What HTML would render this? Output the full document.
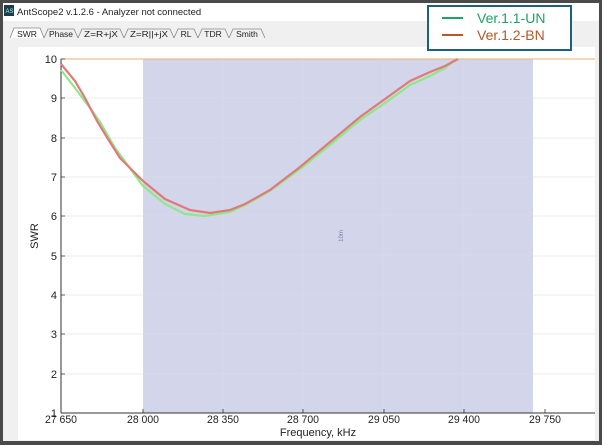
<!DOCTYPE html>
<html><head><meta charset="utf-8"><style>
html,body{margin:0;padding:0;width:602px;height:445px;overflow:hidden;background:#4a4a4a;font-family:"Liberation Sans",sans-serif}
svg{display:block}
</style></head><body>
<svg width="602" height="445" xmlns="http://www.w3.org/2000/svg" font-family="Liberation Sans, sans-serif">
<rect x="0" y="0" width="602" height="445" fill="#4a4a4a"/>
<rect x="3" y="3" width="596" height="438" fill="#f0f0f0"/>
<rect x="3" y="3" width="596" height="18" fill="#fff"/>
<rect x="4" y="5" width="10" height="11" fill="#1f3a4d"/>
<text x="5.5" y="13" font-size="6" fill="#9fd">AS</text>
<text x="17" y="15" font-size="9.5" fill="#222">AntScope2 v.1.2.6 - Analyzer not connected</text>
<g stroke="#888" stroke-width="0.8">
<path d="M10,38 L14,28 H40 L44,38" fill="#fff"/>
<path d="M44,38 L48,29 H74 L78,38" fill="#f0f0f0"/>
<path d="M78,38 L82,29 H120 L124,38" fill="#f0f0f0"/>
<path d="M124,38 L128,29 H170 L174,38" fill="#f0f0f0"/>
<path d="M174,38 L178,29 H194 L198,38" fill="#f0f0f0"/>
<path d="M198,38 L202,29 H225 L229,38" fill="#f0f0f0"/>
<path d="M229,38 L233,29 H261 L265,38" fill="#f0f0f0"/>
</g>
<g font-size="8.5" fill="#222" text-anchor="middle">
<text x="27" y="37">SWR</text><text x="61" y="37">Phase</text><text x="101" y="37" textLength="34" lengthAdjust="spacingAndGlyphs">Z=R+jX</text>
<text x="149" y="37" textLength="38" lengthAdjust="spacingAndGlyphs">Z=R||+jX</text><text x="186" y="37">RL</text><text x="213" y="37">TDR</text><text x="247" y="37">Smith</text>
</g>
<rect x="18" y="47" width="577" height="393" fill="#fff"/>
<rect x="143" y="59" width="390" height="354" fill="#d3d5ea"/>
<g stroke="#dcdde6" stroke-width="0.5">
<line x1="61" y1="98" x2="595" y2="98"/><line x1="61" y1="138" x2="595" y2="138"/><line x1="61" y1="177" x2="595" y2="177"/>
<line x1="61" y1="216" x2="595" y2="216"/><line x1="61" y1="256" x2="595" y2="256"/><line x1="61" y1="295" x2="595" y2="295"/>
<line x1="61" y1="334" x2="595" y2="334"/><line x1="61" y1="374" x2="595" y2="374"/>
<line x1="223" y1="59" x2="223" y2="413"/><line x1="303" y1="59" x2="303" y2="413"/><line x1="384" y1="59" x2="384" y2="413"/><line x1="464" y1="59" x2="464" y2="413"/>
</g>
<line x1="61" y1="59" x2="595" y2="59" stroke="#e8b070" stroke-width="1"/>
<line x1="61" y1="59" x2="61" y2="413" stroke="#333"/>
<line x1="61" y1="413" x2="595" y2="413" stroke="#333"/>
<g stroke="#333" stroke-width="0.8">
<path d="M61,59h4M61,98h4M61,138h4M61,177h4M61,216h4M61,256h4M61,295h4M61,334h4M61,374h4M61,413h4"/>
<path d="M143,413v-4M223,413v-4M303,413v-4M384,413v-4M464,413v-4M545,413v-4"/>
</g>
<text x="343" y="236" font-size="6" fill="#7777aa" transform="rotate(-90 343 236)" text-anchor="middle">10m</text>
<g font-size="11" fill="#222" text-anchor="end">
<text x="57" y="63">10</text><text x="57" y="102">9</text><text x="57" y="142">8</text><text x="57" y="181">7</text>
<text x="57" y="220">6</text><text x="57" y="260">5</text><text x="57" y="299">4</text><text x="57" y="338">3</text>
<text x="57" y="378">2</text><text x="57" y="417">1</text>
</g>
<g font-size="11" fill="#222" text-anchor="middle">
<text x="61" y="423" textLength="32" lengthAdjust="spacingAndGlyphs">27 650</text><text x="143" y="423" textLength="32" lengthAdjust="spacingAndGlyphs">28 000</text><text x="223" y="423" textLength="32" lengthAdjust="spacingAndGlyphs">28 350</text>
<text x="303" y="423" textLength="32" lengthAdjust="spacingAndGlyphs">28 700</text><text x="384" y="423" textLength="32" lengthAdjust="spacingAndGlyphs">29 050</text><text x="464" y="423" textLength="32" lengthAdjust="spacingAndGlyphs">29 400</text><text x="545" y="423" textLength="32" lengthAdjust="spacingAndGlyphs">29 750</text>
<text x="318" y="436">Frequency, kHz</text>
</g>
<text x="38" y="236" font-size="11" fill="#222" transform="rotate(-90 38 236)" text-anchor="middle">SWR</text>
<polyline fill="none" stroke="#8ee88a" stroke-width="2.2" points="61,70 75,88 90,108 100,122 115,148 143,186 165,204 185,214 205,216 230,212 245,205 270,191 300,169 330,145 360,120 385,103 410,85 430,76 445,68 456,59"/>
<polyline fill="none" stroke="#e07a78" stroke-width="2.2" points="61,64 75,81 85,98 97,121 108,139 120,158 143,181 165,199 190,210 210,213 230,210 245,204 270,190 300,167 330,142 360,117 385,99 410,81 430,72 445,66 458,59"/>
<rect x="428" y="6" width="143" height="44" fill="#fff" stroke="#1e5f7a" stroke-width="2"/>
<line x1="442" y1="18" x2="463" y2="18" stroke="#1aa564" stroke-width="2"/>
<line x1="442" y1="35" x2="463" y2="35" stroke="#b5582a" stroke-width="2"/>
<text x="477" y="23" font-size="14" fill="#1aa564">Ver.1.1-UN</text>
<text x="477" y="40" font-size="14" fill="#b5582a">Ver.1.2-BN</text>
</svg>
</body></html>
